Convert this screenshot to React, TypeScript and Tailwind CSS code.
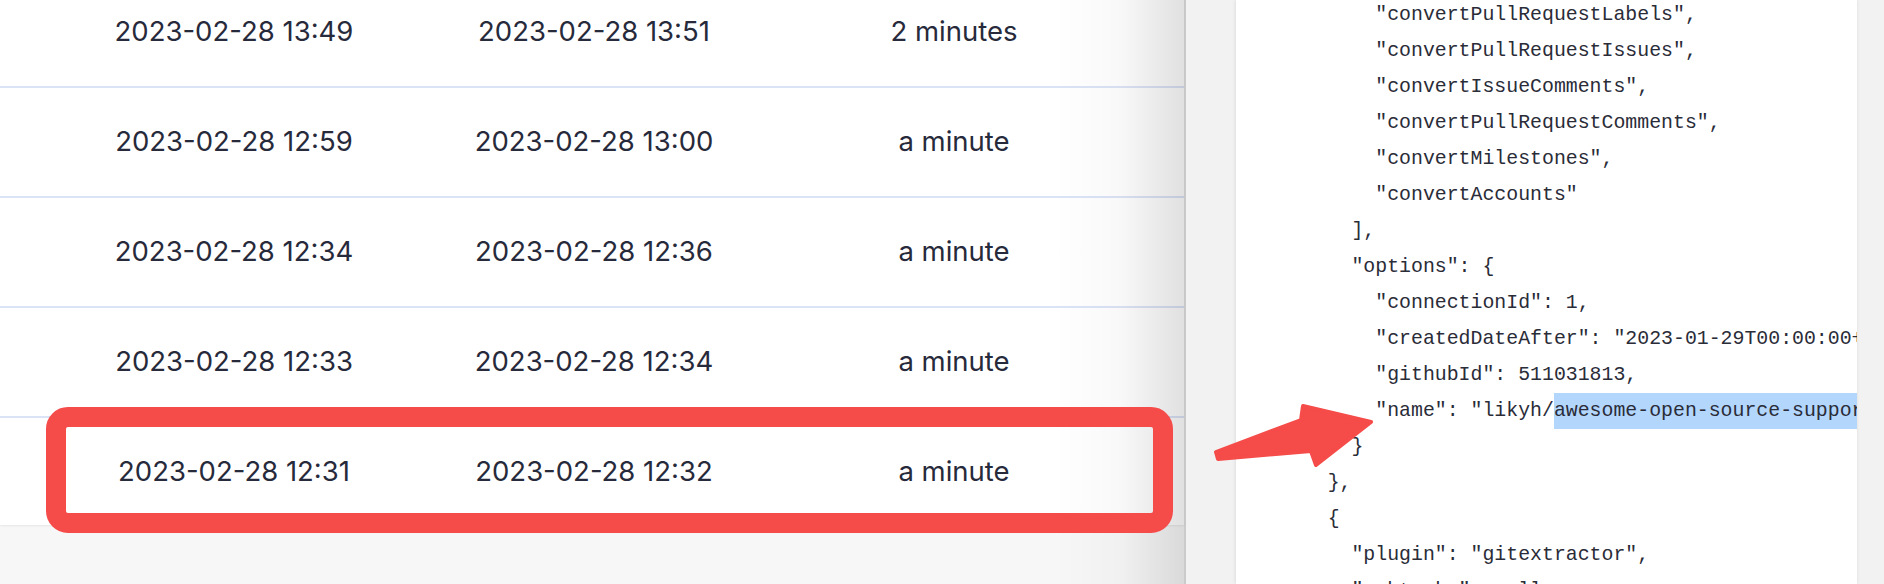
import React from "react";

const rows = [
  ["2023-02-28 13:49", "2023-02-28 13:51", "2 minutes"],
  ["2023-02-28 12:59", "2023-02-28 13:00", "a minute"],
  ["2023-02-28 12:34", "2023-02-28 12:36", "a minute"],
  ["2023-02-28 12:33", "2023-02-28 12:34", "a minute"],
  ["2023-02-28 12:31", "2023-02-28 12:32", "a minute"],
];

const code: string[] = [
  '        "convertPullRequestLabels",',
  '        "convertPullRequestIssues",',
  '        "convertIssueComments",',
  '        "convertPullRequestComments",',
  '        "convertMilestones",',
  '        "convertAccounts"',
  "      ],",
  '      "options": {',
  '        "connectionId": 1,',
  '        "createdDateAfter": "2023-01-29T00:00:00+08:00",',
  '        "githubId": 511031813,',
  "__NAME__",
  "      }",
  "    },",
  "    {",
  '      "plugin": "gitextractor",',
  '      "subtasks": null,',
];

export default function App() {
  return (
    <div className="relative flex h-[584px] w-[1884px] overflow-hidden bg-[#f7f7f7]">
      {/* left table area */}
      <div className="relative h-full w-[1184px] shrink-0">
        <div className="-mt-[22px] bg-white shadow-[0_1px_2px_rgba(0,0,0,0.07)]">
          {rows.map((r, i) => (
            <div
              key={i}
              className={
                i === rows.length - 1
                  ? "grid h-[107px] grid-cols-[54px_360px_360px_360px] items-center text-center"
                  : "grid h-[110px] grid-cols-[54px_360px_360px_360px] items-center border-b-2 border-[#dbe3f6] text-center"
              }
              style={{ fontFamily: "Inter, 'Noto Sans', sans-serif" }}
            >
              <div />
              <div className="text-[27.5px] text-[#272a3b]">{r[0]}</div>
              <div className="text-[27.5px] text-[#272a3b]">{r[1]}</div>
              <div className="text-[27.5px] text-[#272a3b]">{r[2]}</div>
            </div>
          ))}
        </div>
        <div className="pointer-events-none absolute right-0 top-0 h-full w-[130px] bg-linear-to-r from-transparent via-black/[0.025] to-black/[0.12]" />
      </div>

      {/* right drawer */}
      <div className="flex h-full w-[700px] shrink-0 border-l-2 border-[#cbcbcb] bg-[#f2f2f2]">
        <div className="ml-[50px] h-full w-[621px] shrink-0 overflow-hidden bg-white shadow-[-1px_0_3px_rgba(0,0,0,0.08),1px_0_3px_rgba(0,0,0,0.04)]">
          <div
            className="-mt-[3px] pl-[44px] text-[19.85px] text-[#2a2c38]"
            style={{ fontFamily: "'Liberation Mono', 'Courier New', monospace" }}
          >
            {code.map((line, i) =>
              line === "__NAME__" ? (
                <div key={i} className="h-[36px] whitespace-pre leading-[36px]">
                  {'        "name": "likyh/'}
                  <span className="inline-block bg-[#b3d6fd] leading-[36px]">
                    {'awesome-open-source-supporters"'}
                  </span>
                </div>
              ) : (
                <div key={i} className="h-[36px] whitespace-pre leading-[36px]">
                  {line}
                </div>
              )
            )}
          </div>
        </div>
      </div>

      {/* red highlight annotation */}
      <div className="pointer-events-none absolute left-[46px] top-[407px] z-20 h-[126px] w-[1127px] rounded-[22px] border-[20px] border-[#f54b49]" />

      {/* red arrow annotation */}
      <svg
        className="pointer-events-none absolute left-0 top-0 z-20"
        width="1884"
        height="584"
        viewBox="0 0 1884 584"
      >
        <polygon
          points="1216,452 1301,420 1303,406 1371,422 1316,465 1311,451 1218,459"
          fill="#f54b49"
          stroke="#f54b49"
          strokeWidth="4"
          strokeLinejoin="round"
        />
      </svg>
    </div>
  );
}
